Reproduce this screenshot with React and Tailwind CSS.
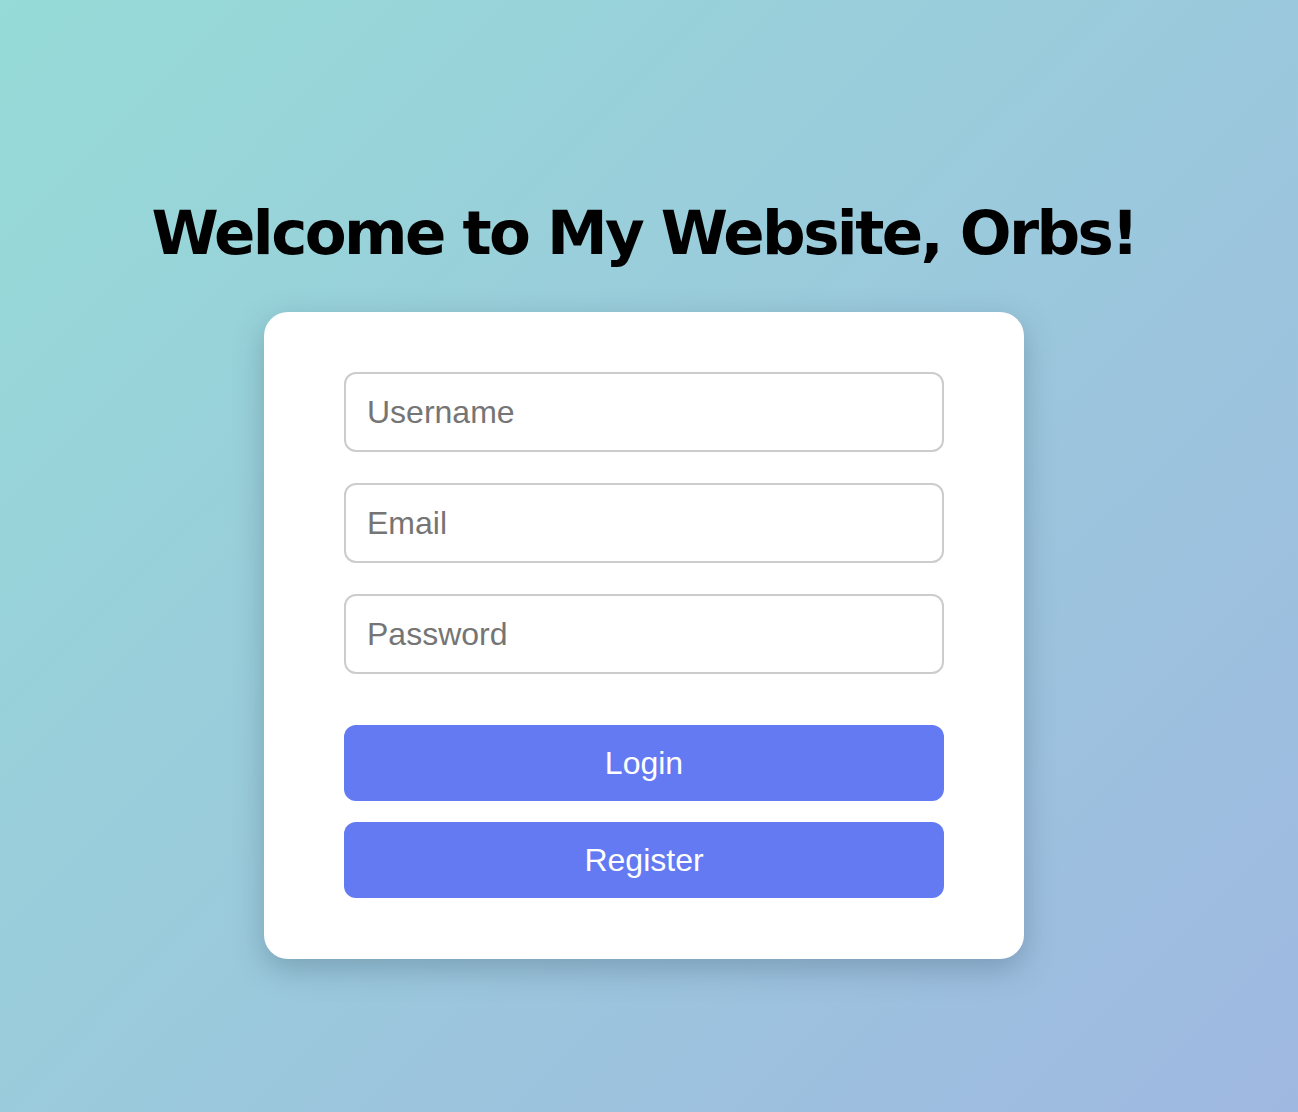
export default function App() {
  return (
    <div className="min-h-[1112px] w-full bg-[linear-gradient(135deg,#96dbd7_0%,#9fb8e1_100%)] pr-[10px] flex flex-col items-center pt-[190px]">
      <h1 className="font-['DejaVu_Sans',sans-serif] font-bold text-[61px] leading-[86px] tracking-[-2.6px] text-black">
        Welcome to My Website, Orbs!
      </h1>

      <div className="mt-[36px] w-[760px] rounded-[24px] bg-white px-[80px] pt-[60px] pb-[61px] shadow-[0_10px_30px_rgba(60,90,110,0.35)]">
        <form className="flex flex-col gap-[31px] font-['Liberation_Sans',Arial,sans-serif]">
          <input
            type="text"
            placeholder="Username"
            className="h-[80px] w-full rounded-[12px] border-2 border-[#cccccc] px-[21px] text-[32px] text-[#333] placeholder:text-[#757575] outline-none"
          />
          <input
            type="email"
            placeholder="Email"
            className="h-[80px] w-full rounded-[12px] border-2 border-[#cccccc] px-[21px] text-[32px] text-[#333] placeholder:text-[#757575] outline-none"
          />
          <input
            type="password"
            placeholder="Password"
            className="h-[80px] w-full rounded-[12px] border-2 border-[#cccccc] px-[21px] text-[32px] text-[#333] placeholder:text-[#757575] outline-none"
          />
        </form>

        <div className="mt-[51px] flex flex-col gap-[21px] font-['Liberation_Sans',Arial,sans-serif]">
          <button className="h-[76px] w-full rounded-[12px] bg-[#647af2] text-[32px] text-white">
            Login
          </button>
          <button className="h-[76px] w-full rounded-[12px] bg-[#647af2] text-[32px] text-white">
            Register
          </button>
        </div>
      </div>
    </div>
  );
}
